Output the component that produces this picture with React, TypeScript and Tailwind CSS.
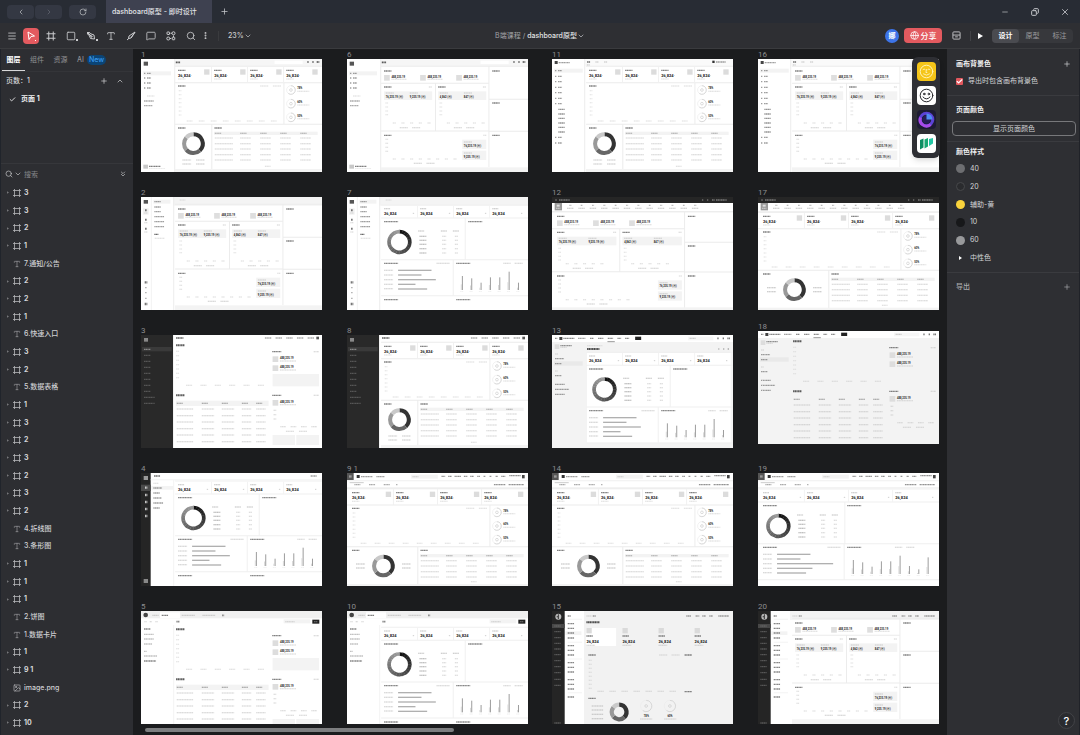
import React from 'react';
import {
  ChevronDown,
  ChevronLeft,
  ChevronRight,
  ChevronsDown,
  ChevronUp,
  Check,
  Copy,
  Globe,
  Image,
  Menu,
  MessageSquare,
  Minus,
  MoreVertical,
  Plus,
  RotateCw,
  Search,
  Square,
  Type,
  X,
} from 'lucide-react';

type Mark = [number, number, number];

interface ArtboardData {
  name: string;
  x: number;
  y: number;
  art: React.ReactNode;
}

// x, y, width of every label stub
const Marks = ({ at, color = '#4a4a4a', h = 4 }: { at: Mark[]; color?: string; h?: number }) => (
  <g stroke={color} strokeWidth={h} strokeDasharray="4 1" opacity={h > 4 ? 0.8 : 0.7}>
    {at.map(([x, y, w], i) => (
      <path key={i} d={`M${x} ${y}h${w}`} />
    ))}
  </g>
);

const column = (x: number, ys: number[], w: number): Mark[] => ys.map((y) => [x, y, w]);
const row = (x: number, y: number, step: number, count: number, w: number): Mark[] =>
  Array.from({ length: count }, (_, i) => [x + i * step, y, w]);

const Rules = ({ d, color = '#ececec' }: { d: string; color?: string }) => (
  <path d={d} stroke={color} strokeWidth={3} fill="none" />
);

const Box = ({ x, y, w, h, fill = '#f3f3f3' }: { x: number; y: number; w: number; h: number; fill?: string }) => (
  <rect x={x} y={y} width={w} height={h} fill={fill} />
);

const Value = ({ x, y, children, size = 12 }: { x: number; y: number; children: string; size?: number }) => (
  <text x={x} y={y} fontSize={size} fontWeight={700} fill="#1c1c1c" fontFamily="Roboto, 'Noto Sans CJK SC', sans-serif">
    {children}
  </text>
);

const polar = (cx: number, cy: number, r: number, turn: number) => {
  const a = turn * Math.PI * 2 - Math.PI / 2;
  return `${(cx + r * Math.cos(a)).toFixed(2)} ${(cy + r * Math.sin(a)).toFixed(2)}`;
};

const Arc = ({ cx, cy, r, from, to, color, width }: { cx: number; cy: number; r: number; from: number; to: number; color: string; width: number }) => (
  <path
    d={`M${polar(cx, cy, r, from)}A${r} ${r} 0 ${to - from > 0.5 ? 1 : 0} 1 ${polar(cx, cy, r, to)}`}
    stroke={color}
    strokeWidth={width}
    fill="none"
  />
);

const Donut = ({ cx, cy, r = 28, width = 12 }: { cx: number; cy: number; r?: number; width?: number }) => (
  <g>
    <Arc cx={cx} cy={cy} r={r} from={0} to={0.38} color="#333333" width={width} />
    <Arc cx={cx} cy={cy} r={r} from={0.38} to={0.64} color="#666666" width={width} />
    <Arc cx={cx} cy={cy} r={r} from={0.64} to={0.86} color="#999999" width={width} />
    <Arc cx={cx} cy={cy} r={r} from={0.86} to={1} color="#c9c9c9" width={width} />
  </g>
);

const GradientDonut = ({ cx, cy }: { cx: number; cy: number }) => (
  <g>
    {Array.from({ length: 24 }, (_, i) => {
      const tone = Math.round(18 + i * 6);
      return (
        <Arc key={i} cx={cx} cy={cy} r={31} from={i / 24} to={(i + 1.1) / 24} color={`rgb(${tone},${tone},${tone})`} width={11} />
      );
    })}
  </g>
);

const Ring = ({ cx, cy, r = 13 }: { cx: number; cy: number; r?: number }) => (
  <g>
    <circle cx={cx} cy={cy} r={r} fill="none" stroke="#ececec" strokeWidth={2} />
    <Arc cx={cx} cy={cy} r={r} from={0} to={0.6} color="#cccccc" width={2} />
    <circle cx={cx} cy={cy} r={4} fill="none" stroke="#cccccc" strokeWidth={2} />
  </g>
);

// Stat cards, line chart, progress rings, donut and table
const StatsLayout = ({ wide = false, dy = 0 }: { wide?: boolean; dy?: number }) => {
  const x = wide ? 15 : 111;
  const left = wide ? 0 : 102;
  const step = wide ? 132 : 108;
  const cx = wide ? 109 : 157;
  const rows = wide ? [238, 254, 271, 287] : [237, 254, 270, 287, 303];
  return (
    <g transform={`translate(0 ${dy})`}>
      {[0, 1, 2, 3].map((i) => (
        <g key={i}>
          <Marks at={[[x + i * step, 34, 22]]} />
          <Value x={x + i * step} y={53}>26,824</Value>
          <Marks at={[[x + 37 + i * step, 50, 5]]} color="#aaaaaa" h={2} />
          <Marks at={[[x + i * step, 60, 22]]} color="#cfcfcf" h={3} />
          <Box x={x + 78 + i * step + (wide ? 23 : 0)} y={31} w={16} h={16} fill="#dcdcdc" />
          {i > 0 && <Rules d={`M${x - 8 + i * step} 24v46`} color="#f1f1f1" />}
        </g>
      ))}
      <Rules d={`M${left} 22H542M${left} 71H542M428 71V196M${left} 196H542M212 196V334`} />
      <Marks at={[[x, 81, 22], [x, 207, 22], [220, 207, 22]]} />
      <Marks at={[[357, 81, 24], [395, 81, 24]]} color="#cdcdcd" h={3} />
      <Marks at={column(x + 2, [95, 107, 119, 131, 144, 156, 168], 8)} color="#d6d6d6" h={3} />
      <Marks at={row(x + 26, 186, wide ? 42 : 36, wide ? 9 : 8, 17)} color="#cfcfcf" h={3} />
      {[93, 134, 175].map((y, i) => (
        <g key={y}>
          <Ring cx={449} cy={y} />
          <Value x={468} y={y - 2} size={8}>{['78%', '60%', '50%'][i]}</Value>
          <Marks at={[[468, y + 4, 36]]} color="#cccccc" h={3} />
        </g>
      ))}
      <Donut cx={cx} cy={254} />
      {wide ? (
        <Marks at={[...column(27, [248, 260], 27), ...column(165, [248, 260], 26)]} color="#a5a5a5" h={3} />
      ) : (
        <Marks at={[...column(124, [303, 315], 26), ...column(165, [303, 315], 26)]} color="#b2b2b2" h={3} />
      )}
      <Box x={219} y={218} w={310} h={10} />
      <Marks at={[[221, 223, 19], [297, 223, 19], [357, 223, 19], [417, 223, 19], [477, 223, 19]]} color="#888888" h={3} />
      {rows.map((y) => (
        <Marks key={y} at={[[221, y, 55], ...row(297, y, 60, 4, 32)]} color="#c2c2c2" h={3} />
      ))}
      <Marks at={[[371, wide ? 301 : 322, 17]]} color="#c8c8c8" h={3} />
      <Box x={left} y={wide ? 308 : 330} w={542 - left} h={9} />
    </g>
  );
};

// Balance cards with two chart panels, a large chart and a side column
const BalanceLayout = ({ wide = false, dy = 0 }: { wide?: boolean; dy?: number }) => {
  const x = wide ? 15 : 111;
  const left = wide ? 0 : 102;
  const panel = wide ? 178 : 144;
  const second = wide ? 211 : 273;
  const side = wide ? 397 : 425;
  const squeeze = wide ? -14 : 0;
  const end = side - 8;
  return (
    <g transform={`translate(0 ${dy})`}>
      <Marks at={[[x, 36, 22], [x, 84, 22], [second, 84, 22], ...column(side + 10, [36, 132 + squeeze / 2, 229 + squeeze], 22)]} />
      {[0, 1, 2].map((i) => (
        <g key={i}>
          <Box x={x + i * 108} y={48} w={17} h={17} fill="#dedede" />
          <Value x={x + 22 + i * 108} y={56} size={8}>488,235.19</Value>
          <Marks at={[[x + 22 + i * 108, 61, 46]]} color="#cccccc" h={3} />
        </g>
      ))}
      {[x, second].map((px, i) => (
        <g key={px}>
          <Box x={px} y={97} w={panel} h={26} />
          <Marks at={[[px + 5, 102, 25], [px + 5 + panel / 2, 102, 25]]} color="#b9b9b9" h={3} />
          <Value x={px + 5} y={117} size={8}>{i === 0 ? '76,235.19 (万)' : '4,862 (万)'}</Value>
          <Value x={px + 5 + panel / 2} y={117} size={8}>{i === 0 ? '9,235.19 (万)' : '847 (万)'}</Value>
          <Marks at={column(px + 4, [132, 144, 156, 167], 8)} color="#d2d2d2" h={3} />
          <Marks at={row(px + 26, 192 + squeeze, 26, 5, 10)} color="#cacaca" h={3} />
          <Marks at={[[px + 47, 206 + squeeze, 25], [px + 84, 206 + squeeze, 25]]} color="#bdbdbd" h={3} />
          <Marks at={[[px + panel - 10, 84, 9]]} color="#c4c4c4" h={3} />
        </g>
      ))}
      <g transform={`translate(0 ${squeeze})`}>
        <Marks at={[[x, 229, 22]]} />
        <Marks at={[[end - 9, 229, 9], ...column(x + 4, [241, 253, 265, 277], 8), ...row(x + 26, 300, 26, 8, 10)]} color="#c9c9c9" h={3} />
        <Marks at={[[x + 89, 313, 25], [x + 127, 313, 25]]} color="#b8b8b8" h={3} />
        {[242, 275].map((y, i) => (
          <g key={y}>
            <Box x={end - 72} y={y} w={72} h={28} />
            <Marks at={[[end - 67, y + 7, 25]]} color="#b9b9b9" h={3} />
            <Value x={end - 67} y={y + 21} size={8}>{i === 0 ? '76,235.19 (万)' : '9,235.19 (万)'}</Value>
          </g>
        ))}
      </g>
      <Rules
        d={`M${left} 22H542M${left} 73H${side}M${left} ${216 + squeeze}H${side}M${second - 8} 73V${216 + squeeze}M${side} 22V324M${side} ${121 + squeeze / 2}H542M${side} ${217 + squeeze}H542`}
      />
      <Box x={left} y={wide ? 309 : 325} w={542 - left} h={14} />
    </g>
  );
};

// Numbers, gradient donut with a list, horizontal bars and columns
const AnalysisLayout = ({ wide = false, dy = 0, footer = true }: { wide?: boolean; dy?: number; footer?: boolean }) => {
  const x = wide ? 15 : 111;
  const left = wide ? 0 : 102;
  const step = wide ? 132 : 108;
  const second = wide ? 267 : 327;
  const heights = wide ? [42, 35, 22, 38, 38, 55, 24, 14, 50] : [42, 35, 22, 38, 38, 55, 22];
  const bars = wide ? [100, 70, 168, 106, 87] : [100, 70, 113, 52, 87];
  return (
    <g transform={`translate(0 ${dy})`}>
      {[0, 1, 2, 3].map((i) => (
        <g key={i}>
          <Marks at={[[x + i * step, 35, 18]]} color="#a8a8a8" h={3} />
          <Value x={x + i * step} y={53}>26,824</Value>
          <Marks at={[[x + step - 22 + i * step, 49, 5]]} color="#bbbbbb" h={3} />
          {i > 0 && <Rules d={`M${x - 8 + i * step} 26v36`} color="#f3f3f3" />}
        </g>
      ))}
      <Marks at={[[x, 74, 42], [wide ? 267 : 363, 74, 42], [x, 199, 42], [second, 199, 42]]} color="#555555" />
      <GradientDonut cx={x + 46} cy={135} />
      <Marks at={[[x + 102, 102, 18], [x + 170, 102, 18], [x + 206, 102, 18]]} color="#a6a6a6" h={3} />
      <Marks at={column(x + 106, [118, 130, 142, 155, 168], 21)} color="#888888" h={3} />
      <Marks at={[...column(x + 174, [118, 130, 142, 155, 168], 12), ...column(x + 212, [118, 130, 142, 155, 168], 9)]} color="#c2c2c2" h={3} />
      <Marks at={[[second - 59, 199, 40], [wide ? 410 : 468, 199, 22], [wide ? 444 : 502, 199, 24]]} color="#bdbdbd" h={3} />
      <Marks at={column(x, [220, 234, 248, 262, 275], 27)} color="#b8b8b8" h={3} />
      {bars.map((w, i) => (
        <Box key={i} x={x + 42} y={218 + i * 14} w={w} h={4} fill="#b0b0b0" />
      ))}
      {heights.map((h, i) => (
        <g key={i}>
          <Box x={second + 17 + i * 28} y={279 - h} w={3} h={h} fill="#9d9d9d" />
          <Box x={second + 14 + i * 28} y={283 - h / 2} w={2} h={h / 2 - 4} fill="#c9c9c9" />
          <Marks at={[[second + 12 + i * 28, 284, 10]]} color="#dddddd" h={2} />
        </g>
      ))}
      {footer && <Marks at={[[x, 308, 42], [second, 308, 42]]} color="#555555" />}
      <Rules
        d={`M${left} 24H542M${left} 63H542M${wide ? 260 : 354} 63V188M${left} 188H542M${second - 9} 188V296M${left} 296H542`}
        color="#f0f0f0"
      />
    </g>
  );
};

// Line chart and table with a column of summaries
const ReportLayout = ({ dy = 0, gray = false }: { dy?: number; gray?: boolean }) => (
  <g transform={`translate(0 ${dy})`}>
    <Marks at={[[105, 31, 26], [105, 181, 26]]} color="#333333" h={6} />
    <Marks at={column(105, [49, 62, 76, 89, 102, 115, 128], 9)} color="#d3d3d3" h={3} />
    <Marks at={row(135, 151, 43, 6, 18)} color="#c9c9c9" h={3} />
    {!gray && <Box x={105} y={197} w={277} h={16} />}
    {[107, 182, 242, 302, 345].map((x, i) => (
      <g key={x}>
        <Marks at={[[x, 205, 18]]} color="#6d6d6d" h={3} />
        <Marks at={column(x, [222, 242, 261, 281, 300, 320], [50, 37, 37, 28, 28][i])} color="#bcbcbc" h={3} />
      </g>
    ))}
    <Marks at={[[393, 50, 27], [393, 181, 27]]} />
    <Marks at={[[517, 50, 16], [517, 181, 16], [397, 226, 8], [397, 239, 8], [397, 252, 8]]} color="#bfbfbf" h={3} />
    {[64, 91, 195].map((y) => (
      <g key={y}>
        <Box x={394} y={y} w={17} h={17} fill="#dddddd" />
        <Value x={416} y={y + 9} size={8}>488,235.19</Value>
        <Marks at={[[416, y + 14, 48]]} color="#c3c3c3" h={3} />
      </g>
    ))}
    <Marks at={[...row(417, 275, 31, 4, 17), [434, 289, 25], [473, 289, 25]]} color="#c2c2c2" h={3} />
    {!gray && (
      <g>
        <Box x={394} y={117} w={139} h={37} />
        <Box x={394} y={300} w={67} h={30} />
        <Box x={465} y={300} w={68} h={30} />
      </g>
    )}
  </g>
);

const LightSide = ({ ys, y0 }: { ys: number[]; y0: number }) => (
  <g>
    <Box x={102} y={0} w={440} h={22} fill="#f6f6f6" />
    <Box x={400} y={5} w={84} h={10} fill="#ffffff" />
    <Box x={8} y={8} w={13} h={12} fill="#555555" />
    <Box x={6} y={y0 - 6} w={84} h={12} />
    <Marks at={column(9, ys, 5)} color="#777777" />
    <Marks at={column(18, ys, 12)} color="#777777" />
    <Marks at={[[104, 10, 13]]} color="#333333" h={5} />
    <Marks at={[[498, 9, 5], [513, 9, 5], [526, 9, 8]]} color="#555555" h={6} />
    <Marks at={[[18, 111, 22]]} color="#cccccc" h={3} />
    <Marks at={[[9, 126, 30], [9, 140, 26]]} color="#888888" />
    <Box x={7} y={317} w={14} h={12} fill="#c8c8c8" />
    <Marks at={[[24, 322, 34]]} />
    <Marks at={[[24, 328, 48]]} color="#cccccc" h={2} />
    <Rules d="M101 0V339" />
  </g>
);

const TwinSide = () => (
  <g>
    <Box x={96} y={0} w={446} h={26} fill="#f4f4f4" />
    <Box x={8} y={9} w={13} h={11} fill="#555555" />
    <Box x={37} y={8} w={51} h={12} />
    <Box x={6} y={34} w={17} h={19} fill="#f1f1f1" />
    <Marks at={column(12, [40, 68, 95], 6)} color="#555555" h={6} />
    <Marks at={column(10, [48, 77, 105], 10)} color="#c0c0c0" h={3} />
    <Marks at={[[11, 256, 8], [11, 321, 8]]} color="#555555" h={7} />
    <Marks at={column(12, [272, 287, 304], 6)} color="#999999" h={4} />
    <Marks at={[[40, 14, 20], [40, 30, 20], [40, 44, 20], [40, 59, 30], [40, 74, 30], [40, 89, 30]]} color="#777777" />
    <Marks at={[[40, 112, 12]]} color="#222222" />
    <Marks at={[[41, 124, 30], [116, 9, 17]]} color="#cccccc" h={3} />
    <Rules d="M31 0V339" color="#f3f3f3" />
    <Rules d="M98 0V339" />
  </g>
);

const DarkSide = () => (
  <g>
    <Box x={0} y={0} w={96} h={339} fill="#292929" />
    <Box x={3} y={36} w={89} h={13} fill="#3a3a3a" />
    <Box x={9} y={9} w={12} h={11} fill="#888888" />
    <Marks at={[[9, 43, 20]]} color="#aaaaaa" />
    <Marks at={column(9, [61, 79, 97, 115, 133, 151, 169], 19)} color="#696969" />
    <Marks at={column(9, [187, 205], 32)} color="#696969" />
    <Marks at={[[105, 9, 22]]} color="#333333" h={5} />
    <Marks at={row(371, 9, 32, 5, 19)} color="#888888" />
    <Box x={525} y={5} w={8} h={8} fill="#555555" />
  </g>
);

const BrandSide = ({ ys }: { ys: number[] }) => (
  <g>
    <Box x={99} y={0} w={443} h={22} fill="#fafafa" />
    <Box x={8} y={6} w={9} h={9} fill="#444444" />
    <Marks at={[[20, 11, 33]]} color="#777777" />
    <Marks at={[[105, 9, 9]]} color="#333333" />
    <Marks at={[[130, 9, 10], [156, 9, 10], [104, 18, 10]]} color="#aaaaaa" h={3} />
    <Box x={6} y={29} w={86} h={12} />
    <Marks at={column(9, ys, 5)} color="#777777" />
    <Marks at={column(18, ys, 12)} color="#777777" />
    <Marks at={column(19, [151, 165, 178, 192, 205, 219], 20)} color="#666666" />
    <Box x={480} y={5} w={7} h={7} fill="#333333" />
    <Marks at={[[491, 9, 30]]} color="#777777" />
    <Rules d="M98 0V339" />
  </g>
);

const TabTop = () => (
  <g>
    <Box x={0} y={0} w={542} h={22} fill="#f0f0f0" />
    <circle cx={14} cy={12} r={7} fill="#444444" />
    <Box x={57} y={4} w={60} h={18} fill="#ffffff" />
    <Marks at={[[62, 13, 20]]} />
    <Marks at={[[34, 13, 20], [122, 13, 40], [184, 13, 38]]} color="#bdbdbd" />
    <Marks at={[[243, 13, 6], [106, 32, 9]]} color="#666666" h={5} />
    <Box x={427} y={25} w={80} h={12} />
    <Marks at={[[432, 32, 28], [10, 32, 7], [26, 32, 7], [43, 32, 7]]} color="#bdbdbd" h={3} />
    <Box x={513} y={26} w={21} h={12} fill="#222222" />
    <Marks at={[[518, 32, 11]]} color="#999999" h={3} />
    <Marks at={[[9, 54, 20], [9, 150, 36]]} color="#555555" />
    <Marks at={[[9, 70, 30], [9, 84, 30], [9, 99, 25], [9, 121, 8], [9, 135, 40]]} color="#a9a9a9" />
    <Rules d="M98 42V339" color="#f3f3f3" />
  </g>
);

const SearchTop = () => (
  <g>
    <Box x={0} y={21} w={542} h={4} />
    <Box x={0} y={0} w={20} h={21} fill="#555555" />
    <Box x={6} y={7} w={8} h={7} fill="#999999" />
    <Box x={29} y={6} w={9} h={9} fill="#333333" />
    <Marks at={[[42, 11, 34], [88, 11, 25]]} color="#777777" />
    <Box x={192} y={5} w={80} h={12} />
    <Marks at={[[196, 11, 18]]} color="#bbbbbb" h={3} />
    <Marks at={[[283, 10, 11], [303, 10, 11], [322, 10, 20], [350, 10, 11], [369, 10, 11], [390, 10, 8], [409, 10, 6], [427, 10, 6], [445, 10, 7], [462, 10, 12], [486, 8, 34]]} color="#666666" />
    <Box x={524} y={6} w={8} h={10} fill="#444444" />
    <Marks at={[[22, 35, 18], [66, 35, 18], [110, 35, 18], [147, 35, 5]]} color="#888888" />
    <Marks at={[[440, 35, 34], [484, 35, 46]]} color="#666666" />
    <Rules d="M8 29H50" color="#cccccc" />
    <Box x={0} y={42} w={542} h={5} />
  </g>
);

const IconTop = () => (
  <g>
    <Box x={0} y={0} w={542} h={18} fill="#262626" />
    <Marks at={[[10, 9, 5], [21, 9, 32], [449, 9, 5], [464, 9, 5], [479, 9, 8], [491, 9, 32]]} color="#9a9a9a" />
    <Box x={8} y={18} w={22} h={22} fill="#999999" />
    <Box x={14} y={23} w={9} h={6} fill="#dddddd" />
    <Marks at={row(52, 25, 34, 12, 6)} color="#999999" h={4} />
    <Marks at={row(45, 34, 34, 12, 19)} color="#aaaaaa" h={3} />
    <Marks at={[[12, 34, 13]]} color="#eeeeee" h={3} />
    <Box x={0} y={42} w={542} h={4} />
  </g>
);

const MenuTop = () => (
  <g>
    <Box x={0} y={0} w={542} h={21} fill="#ffffff" />
    <Box x={22} y={6} w={9} h={9} fill="#444444" />
    <Marks at={[[9, 10, 7], [34, 10, 33], [114, 10, 11], [138, 10, 16], [167, 10, 16], [196, 10, 11], [219, 10, 12]]} color="#555555" />
    <Marks at={[[78, 10, 22]]} color="#777777" />
    <Box x={249} y={5} w={18} h={10} fill="#222222" />
    <Box x={407} y={5} w={76} h={11} fill="#f6f6f6" />
    <Marks at={[[412, 10, 18]]} color="#bbbbbb" />
    <Marks at={[[495, 10, 5], [511, 10, 5], [525, 10, 8]]} color="#555555" h={5} />
    <Rules d="M166 20H188" color="#999999" />
    <Box x={8} y={28} w={14} h={14} fill="#dddddd" />
    <Marks at={[[25, 32, 34]]} color="#666666" />
    <Marks at={[[25, 37, 20], [9, 57, 9], [9, 108, 8]]} color="#c2c2c2" h={3} />
    <Box x={6} y={79} w={86} h={13} fill="#e9e9e9" />
    <Marks at={[[9, 71, 27], [9, 86, 20], [9, 122, 20], [9, 148, 30], [9, 163, 42], [9, 178, 30]]} color="#777777" />
  </g>
);

const RailSide = () => (
  <g>
    <Box x={38} y={0} w={58} h={339} fill="#ffffff" />
    <Box x={0} y={0} w={38} h={339} fill="#252525" />
    <circle cx={19} cy={17} r={9} fill="#bbbbbb" />
    <path d="M19 10v14M14 17h5" stroke="#333333" strokeWidth={3} />
    <Box x={0} y={39} w={38} h={12} fill="#484848" />
    <Marks at={column(7, [45, 62, 80, 97, 114, 131, 149, 167, 185, 205, 223, 336], 20)} color="#6d6d6d" />
    <Box x={40} y={61} w={48} h={11} />
    <Marks at={column(47, [38, 52, 66, 81, 104, 118, 132, 155, 169, 183, 206, 220, 234, 258], 20)} color="#555555" />
    <Marks at={[[47, 15, 10]]} color="#555555" />
    <Marks at={[[103, 15, 16]]} color="#bbbbbb" h={3} />
    <Marks at={[[122, 15, 10], [402, 15, 14], [430, 15, 11], [450, 15, 11], [471, 15, 11], [498, 15, 32]]} color="#777777" />
    <Rules d="M47 25H90M47 94H90M47 144H90M47 245H90" color="#f3f3f3" />
  </g>
);

const MonitorArt = () => (
  <g>
    <Box x={96} y={0} w={446} h={339} fill="#f2f2f2" />
    <RailSide />
    <Marks at={[[103, 34, 40]]} color="#222222" h={6} />
    <Box x={102} y={51} w={90} h={54} fill="#ffffff" />
    {[0, 1, 2, 3].map((i) => (
      <g key={i}>
        <Box x={103 + i * 108} y={51} w={16} h={16} fill="#dadada" />
        <Marks at={[[103 + i * 108, 75, 20]]} />
        <Value x={103 + i * 108} y={95}>26,824</Value>
        <Marks at={[[103 + i * 108, 103, 26]]} color="#bbbbbb" h={3} />
      </g>
    ))}
    <Marks at={[[109, 132, 22], [397, 132, 22], [397, 242, 22], [109, 262, 22]]} />
    <Marks at={[[321, 132, 24], [358, 132, 24]]} color="#c2c2c2" h={3} />
    <Marks at={column(110, [148, 160, 172, 184, 196, 208, 220, 232], 9)} color="#cccccc" h={3} />
    <Marks at={row(136, 241, 36, 7, 19)} color="#c4c4c4" h={3} />
    <Marks at={column(119, [285, 297, 310, 323], 34)} color="#aaaaaa" h={3} />
    <Donut cx={201} cy={303} r={22} width={13} />
    <Ring cx={282} cy={285} r={17} />
    <Ring cx={353} cy={285} r={17} />
    <Value x={275} y={319} size={8}>78%</Value>
    <Value x={346} y={319} size={8}>60%</Value>
    <Marks at={[[264, 324, 36], [336, 324, 36]]} color="#bbbbbb" h={3} />
  </g>
);

const IconRail = () => (
  <g>
    <Box x={0} y={0} w={29} h={339} fill="#252525" />
    <Box x={0} y={35} w={29} h={19} fill="#4a4a4a" />
    <Box x={8} y={9} w={13} h={12} fill="#999999" />
    <Marks at={column(12, [44, 66, 87, 108, 129], 7)} color="#eeeeee" h={7} />
    <Box x={8} y={318} w={13} h={12} fill="#888888" />
    <Box x={31} y={39} w={66} h={11} />
    <Marks at={[[37, 45, 26], [37, 60, 20], [37, 75, 25], [37, 90, 30], [37, 105, 20], [508, 9, 18]]} color="#777777" />
    <Marks at={[[39, 9, 18]]} color="#333333" />
    <Marks at={[[37, 31, 16]]} color="#cccccc" h={3} />
    <Rules d="M29 20H542M98 22V339" color="#f3f3f3" />
  </g>
);

const cols = [8, 214, 419, 625];
const rows = [10, 148, 286, 424, 562];
const brandRows = [35, 52, 68, 85, 101, 118, 134, 235, 252];

const artboards: ArtboardData[] = [
  { name: '1', x: cols[0], y: rows[0], art: <><LightSide ys={[43, 57, 72, 87]} y0={43} /><StatsLayout /></> },
  { name: '2', x: cols[0], y: rows[1], art: <><TwinSide /><BalanceLayout /></> },
  { name: '3', x: cols[0], y: rows[2], art: <><DarkSide /><ReportLayout /></> },
  { name: '4', x: cols[0], y: rows[3], art: <><IconRail /><AnalysisLayout /></> },
  { name: '5', x: cols[0], y: rows[4], art: <><TabTop /><ReportLayout dy={24} /></> },
  { name: '6', x: cols[1], y: rows[0], art: <><LightSide ys={[43, 57, 72, 87]} y0={43} /><BalanceLayout /></> },
  { name: '7', x: cols[1], y: rows[1], art: <><TwinSide /><AnalysisLayout /></> },
  { name: '8', x: cols[1], y: rows[2], art: <><DarkSide /><StatsLayout /></> },
  { name: '9 1', x: cols[1], y: rows[3], art: <><SearchTop /><StatsLayout wide dy={25} /></> },
  { name: '10', x: cols[1], y: rows[4], art: <><TabTop /><AnalysisLayout dy={25} /></> },
  { name: '11', x: cols[2], y: rows[0], art: <><BrandSide ys={brandRows} /><StatsLayout /></> },
  { name: '12', x: cols[2], y: rows[1], art: <><IconTop /><BalanceLayout wide dy={22} /></> },
  {
    name: '13',
    x: cols[2],
    y: rows[2],
    art: (
      <>
        <Box x={0} y={0} w={542} h={339} />
        <Box x={105} y={54} w={430} h={269} fill="#ffffff" />
        <MenuTop />
        <Marks at={[[105, 32, 46]]} color="#cccccc" h={3} />
        <Marks at={[[105, 42, 37]]} color="#222222" h={6} />
        <Marks at={[[498, 42, 3], [512, 42, 5], [526, 42, 5]]} color="#888888" />
        <AnalysisLayout dy={28} footer={false} />
      </>
    ),
  },
  { name: '14', x: cols[2], y: rows[3], art: <><SearchTop /><StatsLayout wide dy={25} /></> },
  { name: '15', x: cols[2], y: rows[4], art: <MonitorArt /> },
  { name: '16', x: cols[3], y: rows[0], art: <><BrandSide ys={brandRows} /><BalanceLayout /></> },
  { name: '17', x: cols[3], y: rows[1], art: <><IconTop /><StatsLayout wide dy={24} /></> },
  { name: '18', x: cols[3], y: rows[2] - 4, art: <><Box x={0} y={0} w={542} h={339} /><MenuTop /><ReportLayout gray /></> },
  { name: '19', x: cols[3], y: rows[3], art: <><SearchTop /><AnalysisLayout wide dy={24} footer={false} /></> },
  { name: '20', x: cols[3], y: rows[4], art: <><Box x={96} y={0} w={446} h={27} /><RailSide /><BalanceLayout /></> },
];

const Artboard: React.FC<{ board: ArtboardData }> = ({ board }) => (
  <figure className="absolute w-[181px]" style={{ left: board.x, top: board.y }}>
    <figcaption className="absolute bottom-full left-0 font-[Roboto,sans-serif] text-[8px] leading-[8px] text-[#8b8c8f]">{board.name}</figcaption>
    <svg viewBox="0 0 542 339" className="block h-[113px] w-full bg-white" preserveAspectRatio="none" aria-hidden="true">
      {board.art}
    </svg>
  </figure>
);

const layers = [
  '3', '3', '2', '1', '7.通知/公告', '2', '2', '1', '6.快速入口', '3', '2', '5.数据表格', '1', '3', '2', '3', '2', '3', '2',
  '4.折线图', '3.条形图', '1', '1', '1', '2.饼图', '1.数据卡片', '1', '9 1', 'image.png', '2', '10',
];

const FrameGlyph = () => (
  <svg viewBox="0 0 8 8" className="h-2 w-2 shrink-0" fill="none" stroke="#b5b6b9" aria-hidden="true">
    <path d="M1.5 0v8M6.5 0v8M0 1.5h8M0 6.5h8" strokeWidth="0.8" />
  </svg>
);

const LayerRow: React.FC<{ name: string }> = ({ name }) => {
  const isText = name.includes('.') && !name.endsWith('.png');
  const isImage = name.endsWith('.png');
  const isFrame = !isText && !isImage;
  return (
    <li className="flex min-h-0 flex-1 items-center pl-[5px]">
      <span className="flex w-[7px] items-center">
        {isFrame && (
          <svg viewBox="0 0 3 4" className="ml-px h-[3px] w-0.5" fill="#77787b" aria-hidden="true"><path d="M0 0l3 2-3 2z" /></svg>
        )}
      </span>
      {isFrame && <FrameGlyph />}
      {isText && <Type className="h-2 w-2 text-[#9b9c9f]" />}
      {isImage && <Image className="h-2 w-2 text-[#b5b6b9]" />}
      <span className={isFrame ? 'pl-[3px] font-bold text-[#d5d6d8]' : 'pl-[3px] font-medium text-[#cfd0d2]'}>{name}</span>
    </li>
  );
};

const LayersPanel = () => (
  <aside className="flex w-[133px] shrink-0 flex-col border-l border-[#20242b] bg-[#2d2e32]">
    <div role="tablist" className="flex h-[23px] items-stretch border-b border-[#343539] pl-px text-[#8f9093]">
      <button role="tab" aria-selected="true" className="w-[23px] border-b border-[#d8d8da] font-bold text-white">图层</button>
      <button role="tab" aria-selected="false" className="w-6">组件</button>
      <button role="tab" aria-selected="false" className="w-[23px]">资源</button>
      <button role="tab" aria-selected="false" className="flex items-center gap-[3px] pl-[5px] font-medium">
        AI <span className="rounded-md bg-[#0b4475] px-0.5 leading-[10px] text-[#3a9bf0]">New</span>
      </button>
    </div>
    <section className="h-[92px] shrink-0 border-b border-[#36373b] pl-[5px] pr-[9px] text-[#d8d9db]">
      <div className="flex h-[18px] items-center">
        <h2 className="flex-1 font-medium">页数：1</h2>
        <button aria-label="添加页面" className="mr-2"><Plus className="h-2 w-2" /></button>
        <button aria-label="收起"><ChevronUp className="h-2 w-2" /></button>
      </div>
      <button className="flex h-[18px] items-center pl-[3px] font-bold text-[#f0f0f1]">
        <Check className="mr-[5px] h-[7px] w-[7px]" strokeWidth={3} />页面 1
      </button>
    </section>
    <div className="flex h-5 shrink-0 items-center pl-1 pr-1.5 text-[#c9cacc]">
      <Search className="h-2 w-2" />
      <ChevronDown className="ml-px h-2 w-2" />
      <input aria-label="搜索" placeholder="搜索" className="ml-0.5 h-3 min-w-0 flex-1 bg-transparent outline-none placeholder:text-[#85868a]" />
      <button aria-label="全部折叠"><ChevronsDown className="h-2 w-2" /></button>
    </div>
    <ul className="mb-[3px] flex min-h-0 flex-1 flex-col">
      {layers.map((name, i) => (
        <LayerRow key={i} name={name} />
      ))}
    </ul>
  </aside>
);

const swatches = [
  { name: '40', className: 'bg-[#6d6e71]' },
  { name: '20', className: 'bg-[#2a2b2e] border border-[#47484b]' },
  { name: '辅助-黄', className: 'bg-[#f9d33c]' },
  { name: '10', className: 'bg-[#17181a]' },
  { name: '60', className: 'bg-[#98999b]' },
];

const StylePanel = () => (
  <aside className="relative w-[133px] shrink-0 border-r border-[#202228] bg-[#2e2f33] text-[#d3d4d6]">
    <section className="h-[47px] border-b border-[#3a3b3f] pl-[9px] pr-2 pt-1.5">
      <div className="flex h-[18px] items-center justify-between">
        <h2 className="font-bold text-[#eeeeef]">画布背景色</h2>
        <button aria-label="添加背景"><Plus className="h-2 w-2" /></button>
      </div>
      <label className="flex h-4 items-center">
        <input
          type="checkbox"
          defaultChecked
          className="absolute h-[7px] w-[7px] appearance-none rounded-[1px] bg-[#e0575d]"
        />
        <Check className="pointer-events-none relative h-[7px] w-[7px] text-white" strokeWidth={4} />
        <span className="pl-[5px]">导出时包含画布背景色</span>
      </label>
    </section>
    <section className="h-[46px] border-b border-[#3a3b3f] pl-[5px] pr-[3px] pt-1.5">
      <h2 className="pl-1 font-bold leading-[16px] text-[#eeeeef]">页面颜色</h2>
      <button className="mt-[3px] block h-[15px] w-full rounded-sm border border-[#77787b] leading-[13px]">显示页面颜色</button>
    </section>
    <section className="h-[131px] border-b border-[#3a3b3f] pl-[9px] pt-0.5">
      <h2 className="font-bold leading-[16px] text-[#eeeeef]">颜色样式</h2>
      <ul className="flex h-[107px] flex-col">
        {swatches.map((swatch) => (
          <li key={swatch.name} className="flex flex-1 items-center gap-[5px]">
            <span className={`h-[9px] w-[9px] rounded-full ${swatch.className}`} />
            <span>{swatch.name}</span>
          </li>
        ))}
        <li className="flex flex-1 items-center">
          <svg viewBox="0 0 3 4" className="mx-[3px] h-1 w-[3px]" fill="#ffffff" aria-hidden="true"><path d="M0 0l3 2-3 2z" /></svg>
          <span className="pl-[5px]">中性色</span>
        </li>
      </ul>
    </section>
    <section className="flex h-7 items-center justify-between pl-[9px] pr-2 text-[#a9aaad]">
      <h2 className="font-medium">导出</h2>
      <button aria-label="添加导出"><Plus className="h-2 w-2" /></button>
    </section>
    <button aria-label="帮助" className="absolute bottom-1.5 right-1 h-[17px] w-[17px] rounded-full border border-[#424347] bg-[#2a2b2f] text-[11px] font-medium text-white">
      ?
    </button>
  </aside>
);

const Plugins = () => (
  <div className="absolute right-[7px] top-2 flex w-[28px] flex-col items-center gap-[5px] rounded-md bg-[#2e2f34] py-[5px] shadow-md">
    <button aria-label="笑脸插件" className="h-[19px] w-[19px] rounded-sm bg-[#f5c518] p-0.5">
      <svg viewBox="0 0 15 15" fill="none" stroke="#fff3b8" strokeWidth="1" strokeLinecap="round">
        <circle cx="7.5" cy="7.5" r="6.3" />
        <path d="M4 5.5q1-1.2 2.2 0M8.8 5.5q1.2-1.2 2.2 0M7.5 5.5l-.6 3h1M4.500 10q3 2.500 6 0" strokeWidth="0.9" />
      </svg>
    </button>
    <button aria-label="表情插件" className="h-[19px] w-[19px] rounded-sm bg-white p-0.5">
      <svg viewBox="0 0 15 15" fill="none" stroke="#26272b" strokeWidth="1" strokeLinecap="round">
        <circle cx="7.5" cy="7.5" r="6.3" />
        <circle cx="5.2" cy="6" r="0.8" />
        <circle cx="9.8" cy="6" r="0.8" />
        <path d="M4 9q3.500 4 7 0" />
      </svg>
    </button>
    <button aria-label="图表插件" className="h-[19px] w-[19px] rounded-sm bg-[#1d1b33] p-px">
      <svg viewBox="0 0 17 17" fill="none">
        <circle cx="8.5" cy="8.5" r="6.3" stroke="#5b43d6" strokeWidth="3" />
        <path d="M2.500 6.500a6.300 6.300 0 0 0 10 7" stroke="#a94be8" strokeWidth="3" />
        <circle cx="8.5" cy="8.5" r="4.200" fill="#261f57" />
        <path d="M8.500 8.500V2.500a6 6 0 0 1 6 6z" fill="#4f8df5" />
      </svg>
    </button>
    <button aria-label="墨刀插件" className="h-[19px] w-[19px] rounded-sm bg-white p-0.5">
      <svg viewBox="0 0 15 15">
        <path d="M1 4l3.500-1.500v9L1 13.500z" fill="#0d8f63" />
        <path d="M5.500 3.500L9 2v8.500L5.500 12.500z" fill="#19a974" />
        <path d="M10 3l4-1v5.500l-4 2.500z" fill="#22c7a5" />
      </svg>
    </button>
  </div>
);

const tools = [
  {
    label: '画框',
    icon: (
      <svg viewBox="0 0 20 20" className="h-[10px] w-[10px]" fill="none" stroke="currentColor" strokeWidth="2">
        <path d="M5.500 1v18M14.500 1v18M1 5.500h18M1 14.500h18" />
      </svg>
    ),
    more: false,
  },
  { label: '矩形', icon: <Square className="h-[10px] w-[10px]" />, more: true },
  {
    label: '钢笔',
    icon: (
      <svg viewBox="0 0 20 20" className="h-[10px] w-[10px]" fill="none" stroke="currentColor" strokeWidth="2">
        <path d="M2 6l4-4 2 3 8 3 1 8-8-1-3-7-3-2zM2 2l9 9" />
        <circle cx="11" cy="11" r="1.500" />
      </svg>
    ),
    more: true,
  },
  { label: '文本', icon: <Type className="h-[10px] w-[10px]" />, more: false },
  {
    label: '画笔',
    icon: (
      <svg viewBox="0 0 20 20" className="h-[10px] w-[10px]" fill="none" stroke="currentColor" strokeWidth="2">
        <path d="M18 2L6 10l-1 5 5-1zM10 14L18 2M2 18l4-3.500" />
      </svg>
    ),
    more: false,
  },
  { label: '评论', icon: <MessageSquare className="h-[10px] w-[10px]" />, more: false },
  {
    label: '组件',
    icon: (
      <svg viewBox="0 0 20 20" className="h-[10px] w-[10px]" fill="none" stroke="currentColor" strokeWidth="2">
        <rect x="2" y="2" width="5" height="5" rx="1" />
        <circle cx="15" cy="4.500" r="3" />
        <circle cx="4.500" cy="15" r="3" />
        <rect x="12.500" y="12.500" width="5" height="5" rx="1" />
        <path d="M9 4.500h3M7.500 15h3M15 9v3" />
      </svg>
    ),
    more: false,
  },
  { label: '搜索', icon: <Search className="h-[10px] w-[10px]" />, more: false },
];

const TitleBar = () => (
  <header className="flex h-[23px] shrink-0 items-stretch bg-[#282c34] text-[#c6c8cc]">
    <nav className="flex w-[106px] items-center pl-[7px]">
      <button aria-label="后退" className="mr-px flex h-[14px] w-[27px] items-center justify-center rounded-sm bg-[#343843]"><ChevronLeft className="h-2 w-2" /></button>
      <button aria-label="前进" className="flex h-[14px] w-[27px] items-center justify-center rounded-sm bg-[#343843] text-[#696d78]"><ChevronRight className="h-2 w-2" /></button>
      <button aria-label="刷新" className="ml-[7px] flex h-[14px] w-[27px] items-center justify-center rounded-sm bg-[#343843]"><RotateCw className="h-2 w-2" /></button>
    </nav>
    <button className="w-[106px] bg-[#3e4150] pl-1.5 text-left font-medium text-[#e3e4e8]">dashboard原型 - 即时设计</button>
    <button aria-label="新建标签页" className="flex w-[25px] items-center justify-center"><Plus className="h-[9px] w-[9px]" /></button>
    <div className="ml-auto flex items-center">
      <button aria-label="最小化" className="flex w-[30px] justify-center"><Minus className="h-2 w-2" /></button>
      <button aria-label="还原" className="flex w-[30px] justify-center"><Copy className="h-2 w-2 -scale-x-100" strokeWidth={3} /></button>
      <button aria-label="关闭" className="flex w-[30px] justify-center"><X className="h-[10px] w-[10px]" /></button>
    </div>
  </header>
);

const Toolbar = () => (
  <div className="grid h-[26px] shrink-0 grid-cols-[1fr_auto_1fr] items-center border-b border-[#3a3b3e] bg-[#2e2f33] text-[#c9cacd]">
    <div className="flex items-center">
      <button aria-label="菜单" className="flex w-[23px] justify-center"><Menu className="h-[10px] w-[10px]" /></button>
      <button aria-label="选择" className="relative mr-0.5 flex h-4 w-4 items-center justify-center rounded-sm bg-[#e35a5f] text-white">
        <svg viewBox="0 0 20 20" className="h-[10px] w-[10px]" fill="none" stroke="currentColor" strokeWidth="2" strokeLinejoin="round">
          <path d="M4 2l13 8-7 1-4 6z" />
        </svg>
        <span className="absolute bottom-[3px] right-[3px] h-px w-px bg-white" />
      </button>
      {tools.map((tool) => (
        <button key={tool.label} aria-label={tool.label} className="relative flex w-5 justify-center">
          {tool.icon}
          {tool.more && <span className="absolute bottom-0 right-[3px] h-0.5 w-0.5 bg-[#c9cacd]" />}
        </button>
      ))}
      <button aria-label="更多"><MoreVertical className="h-[9px] w-[9px]" strokeWidth={3} /></button>
      <span className="ml-2 h-2.5 w-px bg-[#3a3b3e]" />
      <button className="ml-[9px] flex items-center font-medium">23%<ChevronDown className="h-2 w-2" /></button>
    </div>
    <button className="flex items-center">
      <span className="text-[#a3a4a7]">B端课程 /&nbsp;</span>
      <span className="font-medium text-[#e2e3e5]">dashboard原型</span>
      <ChevronDown className="h-2 w-2" />
    </button>
    <div className="flex items-center justify-end pr-[7px]">
      <span className="mr-[5px] flex h-[14px] w-[14px] items-center justify-center rounded-full bg-[#3d74e8] text-[7px] font-bold text-white">娜</span>
      <button className="flex h-[15px] w-[38px] items-center justify-center gap-0.5 rounded-sm bg-[#e35a5f] font-medium text-white">
        <Globe className="h-[9px] w-[9px]" /><span className="text-[8px]">分享</span>
      </button>
      <button aria-label="插件" className="ml-[10px]">
        <svg viewBox="0 0 20 20" className="h-[9px] w-[9px]" fill="none" stroke="currentColor" strokeWidth="2">
          <rect x="2" y="2" width="16" height="16" rx="2" />
          <path d="M2 9h16M7 13h6" />
        </svg>
      </button>
      <span className="ml-[9px] h-2.5 w-px bg-[#424347]" />
      <button aria-label="预览" className="ml-[5px]">
        <svg viewBox="0 0 8 8" className="h-2 w-2" fill="#ffffff"><path d="M2 1l5 3-5 3z" /></svg>
      </button>
      <div className="ml-2 flex h-[14px] rounded-sm bg-[#37383c] text-[#9b9c9f]">
        <button className="w-[27px] rounded-sm bg-[#4a4b50] font-bold text-white">设计</button>
        <button className="w-[27px]">原型</button>
        <button className="w-[27px]">标注</button>
      </div>
    </div>
  </div>
);

export default function App() {
  return (
    <div className="flex h-screen flex-col overflow-hidden bg-[#1b1c1e] font-[Inter,'Noto_Sans_CJK_SC',sans-serif] text-[7px] leading-[10px]">
      <TitleBar />
      <Toolbar />
      <div className="flex min-h-0 flex-1">
        <LayersPanel />
        <main className="relative min-w-0 flex-1 overflow-hidden bg-[#1b1c1e]">
          {artboards.map((board) => (
            <Artboard key={board.name} board={board} />
          ))}
          <div className="absolute bottom-[3px] left-3 h-1 w-[38%] rounded-full bg-[#7d7e80]" />
          <Plugins />
        </main>
        <StylePanel />
      </div>
    </div>
  );
}
